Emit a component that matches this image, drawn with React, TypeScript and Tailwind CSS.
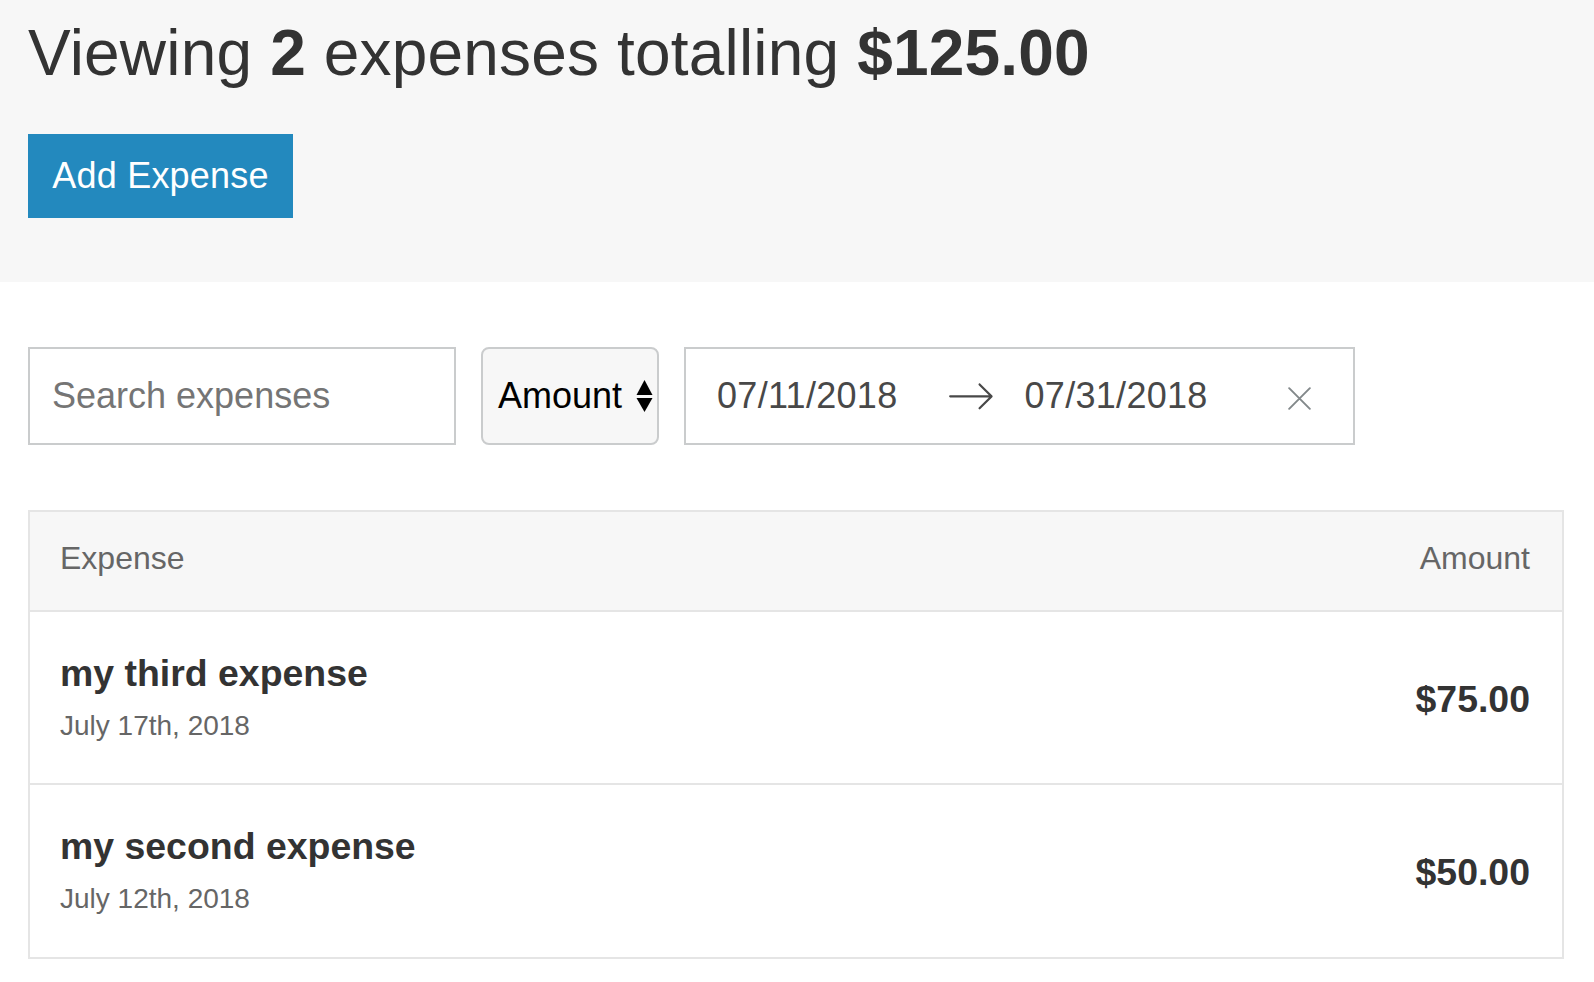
import React from "react";

function SortArrows() {
  return (
    <svg width="17" height="33" viewBox="0 0 17 33" className="ml-[14px]">
      <polygon points="8.5,0 16.5,15 0.5,15" fill="#000" />
      <polygon points="0.5,18 16.5,18 8.5,32" fill="#000" />
    </svg>
  );
}

function RightArrow() {
  return (
    <svg width="48" height="48" viewBox="0 0 1000 1000" className="ml-[49px] shrink-0">
      <path
        fill="#484848"
        d="M694.4 242.4l249.1 249.1c11 11 11 21 0 32L694.4 772.7c-5 5-10 7-16 7s-11-2-16-7c-11-11-11-21 0-32l210.1-210.1H67.1c-13 0-23-10-23-23s10-23 23-23h805.4L662.4 274.5c-21-21.1 11-53.1 32-32.1z"
      />
    </svg>
  );
}

function CloseX() {
  return (
    <svg width="23" height="23" viewBox="0 0 12 12" className="ml-[80px] mt-[4px] shrink-0">
      <path d="M0.6 0.6 L11.4 11.4 M11.4 0.6 L0.6 11.4" stroke="#82888a" strokeWidth="1" strokeLinecap="round" />
    </svg>
  );
}

const expenses = [
  { title: "my third expense", date: "July 17th, 2018", amount: "$75.00" },
  { title: "my second expense", date: "July 12th, 2018", amount: "$50.00" },
];

export default function App() {
  return (
    <div className="min-h-screen bg-white font-['Liberation_Sans',Arial,sans-serif] text-[#333]">
      <div className="h-[282px] bg-[#f7f7f7] pl-[28px] pt-[21px]">
        <h1 className="text-[64px] leading-[64px] font-light tracking-[0.17px] whitespace-nowrap">
          Viewing <span className="font-bold">2</span> expenses totalling{" "}
          <span className="font-bold">$125.00</span>
        </h1>
        <button className="mt-[49px] flex h-[84px] w-[265px] items-center justify-center bg-[#2389be] text-[36px] leading-[36px] tracking-[0.2px] text-white">
          Add Expense
        </button>
      </div>

      <div className="w-[1564px] pl-[28px]">
        <div className="mt-[65px] flex h-[98px]">
          <div className="flex w-[428px] items-center border-2 border-[#cacccd] bg-white pl-[22px]">
            <input
              type="text"
              placeholder="Search expenses"
              className="w-full bg-transparent text-[36px] text-[#333] outline-none placeholder:text-[#757575]"
            />
          </div>
          <div className="ml-[25px] flex w-[178px] items-center rounded-[8px] border-2 border-[#cacccd] bg-[#f7f7f7] pl-[15px]">
            <span className="text-[36px] text-black">Amount</span>
            <SortArrows />
          </div>
          <div className="ml-[25px] flex w-[671px] items-center border-2 border-[#cacccd] bg-white pl-[31px]">
            <span className="text-[36px] tracking-[0.3px] text-[#484848]">07/11/2018</span>
            <RightArrow />
            <span className="ml-[30px] text-[36px] tracking-[0.3px] text-[#484848]">07/31/2018</span>
            <CloseX />
          </div>
        </div>

        <div className="mt-[65px] border-2 border-[#e5e5e5]">
          <div className="flex h-[100px] justify-between border-b-2 border-[#e5e5e5] bg-[#f7f7f7] pl-[30px] pr-[32px] pt-[21px] text-[32px] leading-[51.2px] text-[#666]">
            <span>Expense</span>
            <span>Amount</span>
          </div>
          {expenses.map((e, i) => (
            <div
              key={e.title}
              className={
                i === 0
                  ? "flex h-[173px] items-start justify-between border-b-2 border-[#e5e5e5] pl-[30px] pr-[32px] pt-[31px]"
                  : "flex h-[172px] items-start justify-between pl-[30px] pr-[32px] pt-[31px]"
              }
            >
              <div className="flex flex-col">
                <h3 className="text-[37.44px] font-bold leading-[60px] text-[#333]">{e.title}</h3>
                <span className="text-[28px] leading-[46px] text-[#666]">{e.date}</span>
              </div>
              <h3 className="mt-[26px] text-[37.44px] font-bold leading-[60px] text-[#333]">{e.amount}</h3>
            </div>
          ))}
        </div>
      </div>
    </div>
  );
}
